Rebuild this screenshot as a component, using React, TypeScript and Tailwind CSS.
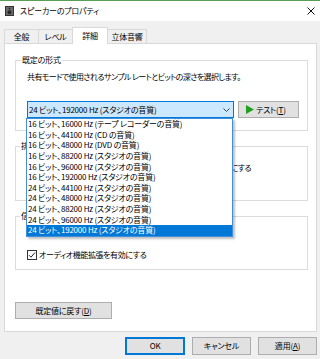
import React from "react";

const items = [
  "16 ビット、16000 Hz (テープ レコーダーの音質)",
  "16 ビット、44100 Hz (CD の音質)",
  "16 ビット、48000 Hz (DVD の音質)",
  "16 ビット、88200 Hz (スタジオの音質)",
  "16 ビット、96000 Hz (スタジオの音質)",
  "16 ビット、192000 Hz (スタジオの音質)",
  "24 ビット、44100 Hz (スタジオの音質)",
  "24 ビット、48000 Hz (スタジオの音質)",
  "24 ビット、88200 Hz (スタジオの音質)",
  "24 ビット、96000 Hz (スタジオの音質)",
  "24 ビット、192000 Hz (スタジオの音質)",
];

function Check({ checked }: { checked?: boolean }) {
  return (
    <div className="w-[10px] h-[10px] border border-[#333333] bg-white flex items-center justify-center shrink-0">
      {checked && (
        <svg width="8" height="8" viewBox="0 0 8 8">
          <path d="M1 4.2 L3 6.2 L7 1.5" stroke="#222" strokeWidth="1" fill="none" />
        </svg>
      )}
    </div>
  );
}

function Btn({ children, w, def }: { children: React.ReactNode; w: string; def?: boolean }) {
  return (
    <div
      className={`${w} h-[18px] flex items-center justify-center bg-[#e1e1e1] border ${
        def ? "border-[#0078d7] shadow-[inset_0_0_0_1px_#0078d7]" : "border-[#adadad]"
      }`}
    >
      {children}
    </div>
  );
}

export default function App() {
  return (
    <div className="relative w-[320px] h-[359px] overflow-hidden bg-[#f0f0f0] text-[8px] leading-[12px] tracking-[-0.2px] text-black font-['Noto_Sans_CJK_JP','Noto_Sans',sans-serif] [font-feature-settings:'palt']">
      <div className="h-px bg-[#5a9e55]" />
      {/* title bar */}
      <div className="h-[20px] bg-white flex items-center">
        <svg className="ml-[5px]" width="9" height="10" viewBox="0 0 9 10">
          <rect x="0.5" y="0.5" width="8" height="9" fill="#6b6b6b" stroke="#333" />
          <circle cx="4.5" cy="6.3" r="2" fill="#2a2a2a" />
          <circle cx="4.5" cy="2.6" r="0.9" fill="#2a2a2a" />
        </svg>
        <span className="ml-[6px]">スピーカーのプロパティ</span>
        <svg className="ml-auto mr-[5px]" width="8" height="8" viewBox="0 0 8 8">
          <path d="M0.5 0.5 L7.5 7.5 M7.5 0.5 L0.5 7.5" stroke="#111" strokeWidth="1" />
        </svg>
      </div>
      {/* tabs */}
      <div className="h-[22px] flex items-end pl-[4px]">
        <div className="w-[35px] h-[14px] bg-[#f0f0f0] border border-b-0 border-[#d9d9d9] flex items-center justify-center">
          全般
        </div>
        <div className="-ml-px w-[35px] h-[14px] bg-[#f0f0f0] border border-b-0 border-[#d9d9d9] flex items-center justify-center">
          レベル
        </div>
        <div className="relative z-10 -ml-px w-[36px] h-[17px] -mb-px bg-white border border-b-0 border-[#d9d9d9] flex items-center justify-center pb-[1px]">
          詳細
        </div>
        <div className="-ml-px w-[40px] h-[14px] bg-[#f0f0f0] border border-b-0 border-[#d9d9d9] flex items-center justify-center">
          立体音響
        </div>
      </div>
      {/* panel */}
      <div className="ml-[4px] w-[313px] h-[289px] bg-white border border-[#d9d9d9] pl-[10px] flex flex-col">
        {/* group 1 */}
        <div className="relative mt-[16px] w-[293px] h-[71px] border border-[#dcdcdc] pl-[11px] pt-[10px]">
          <span className="absolute -top-[7px] left-[5px] bg-white px-px">既定の形式</span>
          <div className="tracking-[-0.6px]">共有モードで使用されるサンプル レートとビットの深さを選択します。</div>
          <div className="mt-[18px] flex items-center">
            <div className="w-[207px] h-[17px] bg-[#cce8ff] border border-[#0078d7] flex items-center pl-[1px]">
              <span>24 ビット、192000 Hz (スタジオの音質)</span>
              <svg className="ml-auto mr-[3px]" width="7" height="4" viewBox="0 0 7 4">
                <path d="M0.5 0.5 L3.5 3.5 L6.5 0.5" stroke="#444" strokeWidth="1" fill="none" />
              </svg>
            </div>
            <div className="ml-[4px] w-[61px] h-[17px] bg-[#e1e1e1] border border-[#adadad] flex items-center pl-[7px]">
              <svg width="8" height="9" viewBox="0 0 8 9">
                <path d="M0 0 L8 4.5 L0 9 Z" fill="#1fa01f" />
              </svg>
              <span className="ml-[2px]">
                テスト(<span className="underline">T</span>)
              </span>
            </div>
          </div>
        </div>
        {/* group 2 */}
        <div className="relative mt-[15px] w-[293px] h-[55px] border border-[#dcdcdc] pl-[11px] pt-[15px] flex flex-col gap-[4px]">
          <span className="absolute -top-[7px] left-[4px] bg-white px-px">排他モード</span>
          <div className="flex items-center gap-[2px]">
            <Check checked />
            <span className="tracking-[-0.7px]">アプリケーションによりこのデバイスを排他的に制御できるようにする</span>
          </div>
          <div className="flex items-center gap-[2px]">
            <Check checked />
            <span className="tracking-[-0.6px]">排他モードのアプリケーションを優先する</span>
          </div>
        </div>
        {/* group 3 */}
        <div className="relative mt-[15px] w-[293px] h-[54px] border border-[#dcdcdc] pl-[11px] pt-[8px]">
          <span className="absolute -top-[7px] left-[4px] bg-white px-px">信号の機能強化</span>
          <div className="tracking-[-0.6px]">オーディオ機能拡張により、サウンドが変わることがあります。</div>
          <div className="mt-[12px] flex items-center gap-[2px]">
            <Check checked />
            <span className="tracking-[-0.4px]">オーディオ機能拡張を有効にする</span>
          </div>
        </div>
        <div className="mt-[32px] w-[97px] h-[17px] bg-[#e1e1e1] border border-[#adadad] flex items-center justify-center">
          <span>
            既定値に戻す(<span className="underline">D</span>)
          </span>
        </div>
      </div>
      {/* bottom buttons */}
      <div className="mt-[5px] flex pl-[125px]">
        <Btn w="w-[60px]" def>
          OK
        </Btn>
        <div className="ml-[7px]">
          <Btn w="w-[59px]">キャンセル</Btn>
        </div>
        <div className="ml-[7px]">
          <Btn w="w-[59px]">
            <span>
              適用(<span className="underline">A</span>)
            </span>
          </Btn>
        </div>
      </div>
      {/* dropdown list overlay */}
      <div className="absolute left-[26px] top-[118px] w-[207px] bg-white border border-[#3f8fdc] shadow-[2px_2px_2px_rgba(0,0,0,0.25)]">
        {items.map((t, i) => (
          <div
            key={i}
            className={`h-[10.6px] flex items-center pl-[1px] whitespace-nowrap ${
              i === items.length - 1 ? "bg-[#0078d7] text-white" : ""
            }`}
          >
            {t}
          </div>
        ))}
      </div>
    </div>
  );
}
